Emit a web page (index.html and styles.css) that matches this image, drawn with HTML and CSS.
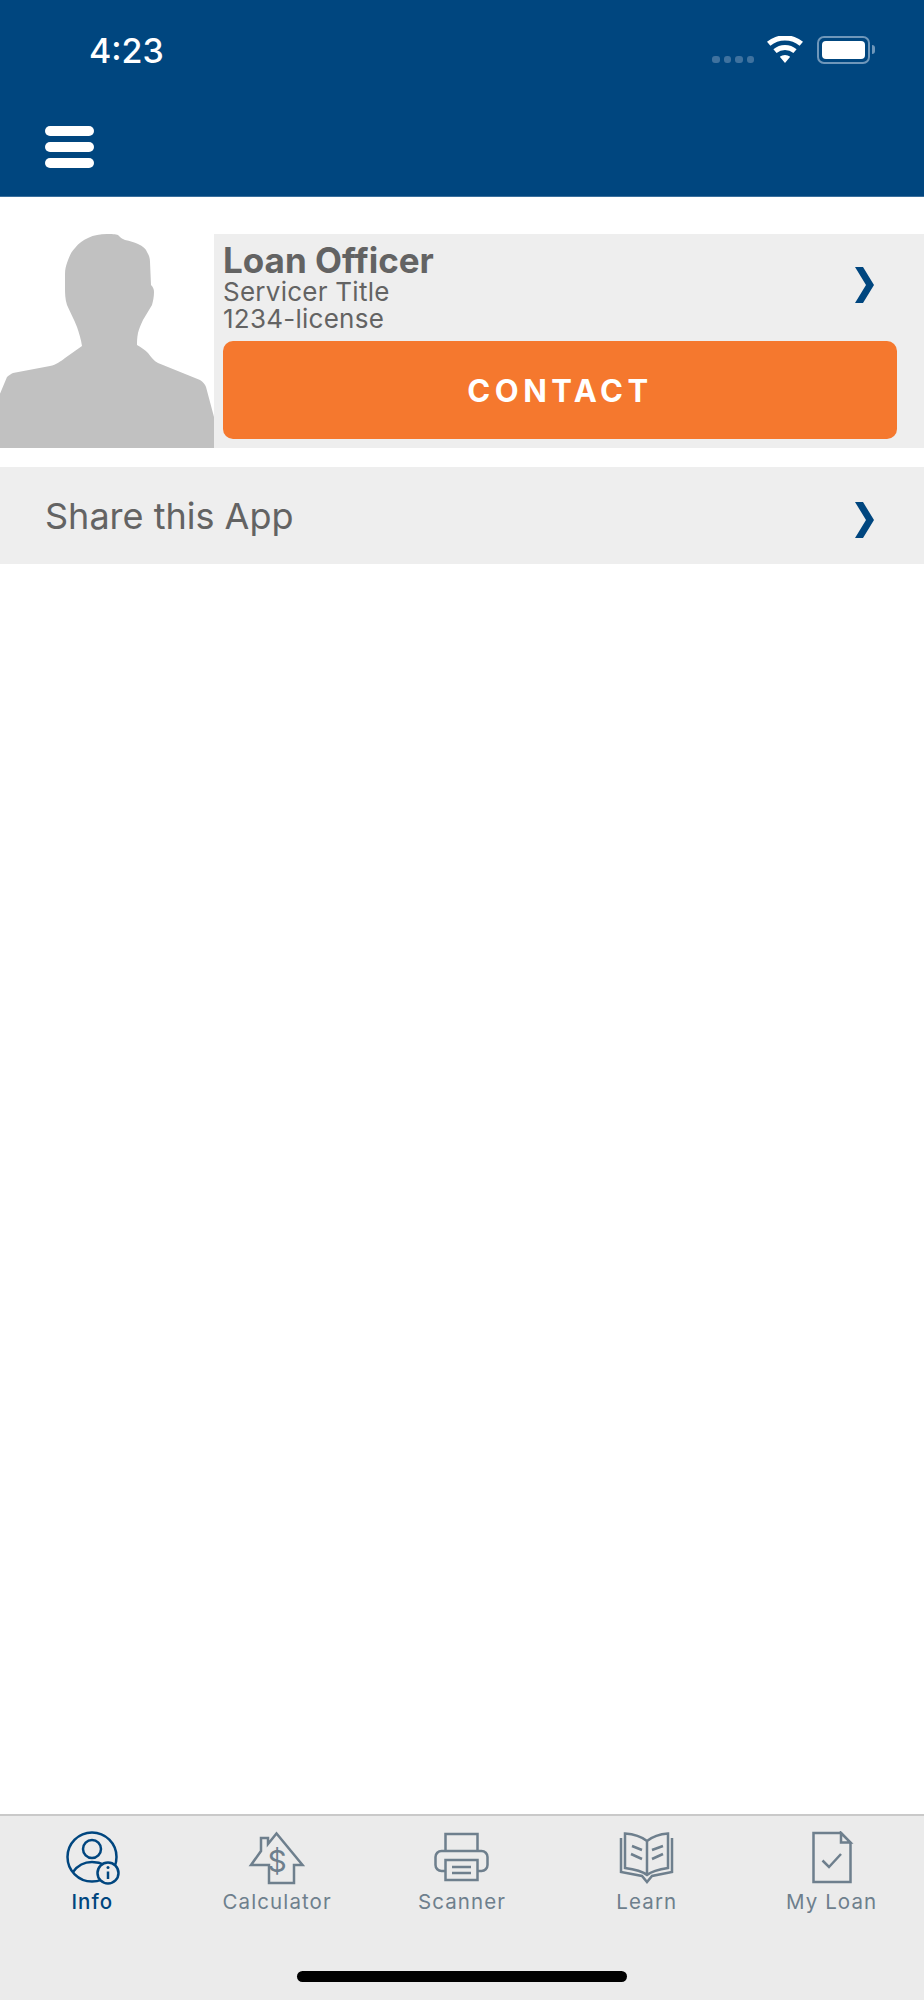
FILE: index.html
```html
<!DOCTYPE html>
<html lang="en">
<head>
  <meta charset="UTF-8">
  <title>Info</title>
  <link rel="stylesheet" href="styles.css">
</head>
<body>
  <div class="app">
    <header class="top">
      <div class="status">
        <span class="time">4:23</span>
        <div class="status-icons">
          <div class="signal"><i></i><i></i><i></i><i></i></div>
          <svg class="wifi" viewBox="0 0 36 27"><path d="M18 27l-5.2-6.2a8 8 0 0 1 10.4 0zM9.6 17l-3.2-3.8a18 18 0 0 1 23.200 0L26.400 17a13 13 0 0 0-16.800 0zM3.400 9.800L0 5.800a28 28 0 0 1 36 0l-3.400 4a23 23 0 0 0-29.200 0z" fill="#fff"/></svg>
          <div class="battery"><div class="battery-fill"></div></div>
          <div class="battery-nub"></div>
        </div>
      </div>
      <div class="menu"><span></span><span></span><span></span></div>
    </header>

    <main class="content">
      <section class="card">
        <svg class="photo" viewBox="0 0 214 214"><path class="silhouette" d="M107 0C111 0 116 0 118 1C120 3 122 5 125 6C130 7 134 8 138 10C143 12 146 15 147 18C149 21 150 24 150 28L151 51C153 53 154 55 154 58C154 63 153 67 152 71C149 76 146 81 143 86C141 90 139 95 138 99C137 104 137 107 137 111C141 113 145 116 148 119C151 123 154 127 158 129L200 146C203 148 205 150 206 153L214 183V222H-6V174L7 143C9 141 11 140 13 139L50 132C56 131 61 127 65 124L82 112C81 105 79 99 77 93C74 85 70 78 67 71C65 65 65 59 65 53V40C65 35 66 32 67 29C69 23 71 18 75 14C79 9 83 6 88 4C94 1 100 0 107 0Z"/></svg>
        <div class="card-body">
          <div class="card-head">
            <div class="card-text">
              <h2 class="name">Loan Officer</h2>
              <p class="meta">Servicer Title</p>
              <p class="meta">1234-license</p>
            </div>
            <svg class="chevron" viewBox="0 0 19 36"><path d="M0 0H8L19 18L8 36H0L11 18Z" fill="#00467f"/></svg>
          </div>
          <button class="contact">CONTACT</button>
        </div>
      </section>

      <section class="share">
        <span class="share-label">Share this App</span>
        <svg class="chevron" viewBox="0 0 19 36"><path d="M0 0H8L19 18L8 36H0L11 18Z" fill="#00467f"/></svg>
      </section>
    </main>

    <nav class="tabs">
      <div class="tab active">
        <svg class="tab-icon" viewBox="0 0 64 54">
          <circle cx="32" cy="26" r="24.500"/>
          <circle cx="32" cy="18" r="9"/>
          <path d="M13 41C18 34 25 31 32 31C37 31 41 32 45 34"/>
          <circle class="badge" cx="48" cy="42" r="10.500"/>
          <path d="M48 40.500V48"/>
          <circle class="dot" cx="48" cy="36.500" r="1.500"/>
        </svg>
        <span class="tab-label">Info</span>
      </div>
      <div class="tab">
        <svg class="tab-icon" viewBox="0 0 64 54">
          <path d="M16 20V7H23V13L31.500 2.500L57.500 34H49V52H24V34H6Z"/>
          <text class="dollar" x="32" y="41">$</text>
        </svg>
        <span class="tab-label">Calculator</span>
      </div>
      <div class="tab">
        <svg class="tab-icon" viewBox="0 0 64 54">
          <path d="M15.500 20V3H47.500V20"/>
          <path d="M15.500 40H11.500A6 6 0 0 1 5.500 34V26A6 6 0 0 1 11.500 20H51.500A6 6 0 0 1 57.500 26V34A6 6 0 0 1 51.500 40H47.500"/>
          <rect x="15.500" y="29" width="32" height="20"/>
          <path d="M22 36H41M22 42H41"/>
        </svg>
        <span class="tab-label">Scanner</span>
      </div>
      <div class="tab">
        <svg class="tab-icon" viewBox="0 0 64 54">
          <path d="M32 10C27 6 18 3 10 2.500V37C18 38 27 40 32 44C37 40 46 38 53 37V2.500C46 3 37 6 32 10ZM32 10V44"/>
          <path d="M6 7V41L27 45L32 51L37 45L57 41V7"/>
          <path d="M17 15L27 19M16 23L27 28M37 19L48 15M37 28L48 23"/>
        </svg>
        <span class="tab-label">Learn</span>
      </div>
      <div class="tab">
        <svg class="tab-icon" viewBox="0 0 64 54">
          <path d="M13.500 2H41L50.500 12V51H13.500Z"/>
          <path class="fold" d="M41 2V11.500H50.500Z"/>
          <path d="M22.500 29.500L29 36L41 23"/>
        </svg>
        <span class="tab-label">My Loan</span>
      </div>
      <div class="home-bar"></div>
    </nav>
  </div>
</body>
</html>
```

FILE: styles.css
```css
* {
  box-sizing: border-box;
}

body {
  margin: 0;
  font-family: Inter, "Liberation Sans", sans-serif;
  background: #fff;
  color: #636363;
}

.app {
  display: flex;
  flex-direction: column;
  height: 2000px;
}

/* header */
.top {
  height: 197px;
  background: #00467f;
  border-bottom: 1px solid #3a6f9c;
  padding: 0 49px 0 45px;
}

.status {
  display: flex;
  justify-content: space-between;
  height: 126px;
  padding-top: 30px;
}

.time {
  margin-left: 44px;
  font-size: 34px;
  font-weight: 500;
  line-height: 41px;
  color: #fff;
}

.status-icons {
  display: flex;
  align-items: flex-start;
  padding-top: 6px;
}

.signal {
  display: flex;
  gap: 4px;
  margin-top: 20px;
  margin-right: 13px;
}

.signal i {
  width: 7.500px;
  height: 7px;
  border-radius: 3px;
  background: #3f729f;
}

.wifi {
  width: 36px;
  height: 27px;
  margin-right: 14px;
}

.battery {
  width: 53px;
  height: 28px;
  padding: 3px 3px;
  border: 2px solid #6f97ba;
  border-radius: 7px;
}

.battery-fill {
  height: 100%;
  background: #fff;
  border-radius: 4px;
}

.battery-nub {
  width: 3px;
  height: 9px;
  margin: 9px 0 0 2px;
  background: #6f97ba;
  border-radius: 0 3px 3px 0;
}

.menu {
  display: flex;
  flex-direction: column;
  gap: 6px;
  width: 49px;
}

.menu span {
  height: 10px;
  background: #fff;
  border-radius: 5px;
}

/* content */
.content {
  flex: 1;
  padding-top: 37px;
}

.card {
  display: flex;
  height: 214px;
}

.photo {
  width: 214px;
  height: 214px;
  flex: none;
}

.silhouette {
  fill: #c1c1c1;
  filter: blur(0.6px);
}

.card-body {
  flex: 1;
  background: #eee;
  padding-left: 9px;
}

.card-head {
  display: flex;
  justify-content: space-between;
  align-items: flex-start;
  height: 107px;
  padding-right: 50px;
}

.card-text {
  padding-top: 8px;
}

.name {
  margin: 0;
  font-size: 35px;
  font-weight: 700;
  line-height: 36px;
}

.meta {
  margin: 0;
  font-size: 26px;
  line-height: 27px;
  letter-spacing: 0.250px;
}

.chevron {
  width: 19px;
  height: 36px;
  flex: none;
}

.card-head .chevron {
  margin-top: 33px;
}

.contact {
  display: block;
  width: 674px;
  height: 98px;
  border: none;
  border-radius: 10px;
  background: #f5782e;
  color: #fff;
  font-family: inherit;
  font-size: 31px;
  font-weight: 700;
  letter-spacing: 4.500px;
}

.share {
  display: flex;
  justify-content: space-between;
  align-items: center;
  height: 97px;
  margin-top: 19px;
  padding: 0 50px 0 45px;
  background: #eee;
}

.share .chevron {
  margin-top: 8px;
}

.share-label {
  font-size: 36px;
}

/* tab bar */
.tabs {
  position: relative;
  display: grid;
  grid-template-columns: repeat(5, 1fr);
  height: 186px;
  padding-top: 15px;
  background: #ebebeb;
  border-top: 2px solid #c9c9c9;
}

.tab {
  display: flex;
  flex-direction: column;
  align-items: center;
  color: #6e7f8d;
}

.tab.active {
  color: #00467f;
}

.tab-icon {
  width: 64px;
  height: 54px;
  fill: none;
  stroke: currentColor;
  stroke-width: 2.500;
}

.tab-icon .badge {
  fill: #ebebeb;
}

.tab-icon .dot {
  fill: currentColor;
  stroke: none;
}

.tab-icon .fold {
  fill: #ebebeb;
}

.tab-icon .dollar {
  fill: currentColor;
  stroke: none;
  font-size: 30px;
  text-anchor: middle;
}

.tab-label {
  margin-top: 5px;
  font-size: 20.500px;
  line-height: 24px;
  letter-spacing: 1.100px;
}

.tab.active .tab-label {
  font-weight: 500;
}

.home-bar {
  position: absolute;
  left: 297px;
  bottom: 18px;
  width: 330px;
  height: 11px;
  border-radius: 6px;
  background: #000;
}
```
